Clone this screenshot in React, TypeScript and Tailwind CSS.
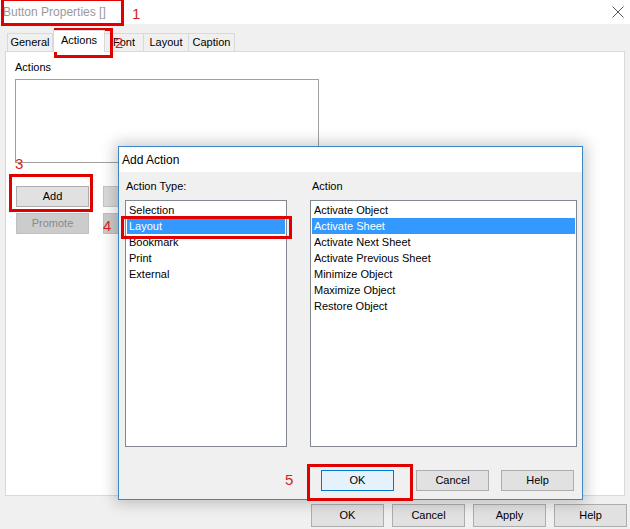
import React from "react";

const font = { fontFamily: '"Liberation Sans", Arial, sans-serif' };

type Variant = "normal" | "disabled" | "default" | "hidden";

function Btn({ label, h, variant = "normal", className = "" }: { label: string; h: "21" | "23"; variant?: Variant; className?: string }) {
  const v =
    variant === "disabled"
      ? "bg-[#cccccc] border-[#bfbfbf] text-[#8a8a8a]"
      : variant === "default"
      ? "bg-[#e5f1fb] border-[#0078d7] text-black"
      : variant === "hidden"
      ? "bg-[#dadada] border-[#c4c4c4] text-black"
      : "bg-[#e1e1e1] border-[#adadad] text-black";
  const hc = h === "21" ? "h-[21px]" : "h-[23px]";
  return (
    <div className={`flex items-center justify-center w-[73px] border text-[11px] ${hc} ${v} ${className}`}>
      {label}
    </div>
  );
}

function ListBox({
  items,
  selected,
  className = "",
}: {
  items: string[];
  selected: number;
  className?: string;
}) {
  return (
    <div className={`bg-white border border-[#828790] pt-px px-px ${className}`}>
      {items.map((it, i) => (
        <div
          key={it}
          className={`h-[16px] leading-[16px] pl-[2px] text-[11px] whitespace-nowrap ${
            i === selected ? "bg-[#3399ff] text-white" : "text-black"
          }`}
        >
          {it}
        </div>
      ))}
    </div>
  );
}

export default function App() {
  return (
    <div
      className="relative w-[630px] h-[529px] overflow-hidden bg-[#f0f0f0] text-[11px] text-black"
      style={font}
    >
      {/* Title bar */}
      <div className="h-[24px] bg-white flex items-center justify-between pl-[3px] pr-[6px]">
        <span className="text-[12px] text-[#999999]">Button Properties []</span>
        <svg width="12" height="12" viewBox="0 0 12 12">
          <path d="M0.5 0.5 L11.5 11.5 M11.5 0.5 L0.5 11.5" stroke="#555" strokeWidth="1" fill="none" />
        </svg>
      </div>

      {/* Tabs */}
      <div className="flex items-end h-[27px] pl-[7px]">
        <div className="h-[18px] w-[46px] border border-b-0 border-[#d9d9d9] bg-[#f0f0f0] flex items-center justify-center">
          General
        </div>
        <div className="relative z-10 -mb-px h-[22px] w-[52px] border border-b-0 border-[#d9d9d9] bg-white flex items-center justify-center pb-[3px]">
          Actions
        </div>
        <div className="h-[18px] w-[39px] border border-l-0 border-b-0 border-[#d9d9d9] bg-[#f0f0f0] flex items-center justify-center">
          Font
        </div>
        <div className="h-[18px] w-[45px] border border-l-0 border-b-0 border-[#d9d9d9] bg-[#f0f0f0] flex items-center justify-center">
          Layout
        </div>
        <div className="h-[18px] w-[46px] border border-l-0 border-b-0 border-[#d9d9d9] bg-[#f0f0f0] flex items-center justify-center">
          Caption
        </div>
      </div>

      {/* Panel */}
      <div className="mx-[5px] h-[445px] bg-white border border-[#d9d9d9] pt-[8px] pl-[9px]">
        <div className="leading-[14px]">Actions</div>
        <div className="mt-[5px] w-[304px] h-[84px] border border-[#a0a0a0] bg-white" />
        <div className="mt-[23px] ml-[1px] flex gap-[14px]">
          <Btn label="Add" h="21" />
          <Btn label="" h="21" variant="hidden" />
        </div>
        <div className="mt-[6px] ml-[1px] flex gap-[14px]">
          <Btn label="Promote" h="21" variant="disabled" />
          <Btn label="" h="21" variant="disabled" />
        </div>
      </div>

      {/* Bottom buttons */}
      <div className="mt-[8px] flex justify-end gap-[8px] pr-[3px]">
        <Btn label="OK" h="23" />
        <Btn label="Cancel" h="23" />
        <Btn label="Apply" h="23" />
        <Btn label="Help" h="23" />
      </div>

      {/* Add Action dialog */}
      <div className="absolute left-[118px] top-[146px] w-[465px] h-[354px] border border-[#3a86c8] bg-[#f0f0f0] shadow-[0_0_14px_3px_rgba(0,0,0,0.22)] flex flex-col">
        <div className="h-[25px] bg-white flex items-center pl-[3px] text-[12px]">Add Action</div>
        <div className="flex pl-[6px] pt-[7px] gap-[23px]">
          <div className="flex flex-col">
            <div className="leading-[14px] pl-px">Action Type:</div>
            <ListBox
              className="mt-[7px] w-[162px] h-[247px]"
              items={["Selection", "Layout", "Bookmark", "Print", "External"]}
              selected={1}
            />
          </div>
          <div className="flex flex-col">
            <div className="leading-[14px] pl-[2px]">Action</div>
            <ListBox
              className="mt-[7px] w-[267px] h-[247px]"
              items={[
                "Activate Object",
                "Activate Sheet",
                "Activate Next Sheet",
                "Activate Previous Sheet",
                "Minimize Object",
                "Maximize Object",
                "Restore Object",
              ]}
              selected={1}
            />
          </div>
        </div>
        <div className="mt-[23px] flex pl-[202px]">
          <Btn label="OK" h="21" variant="default" />
          <Btn label="Cancel" h="21" className="ml-[22px]" />
          <Btn label="Help" h="21" className="ml-[12px]" />
        </div>
      </div>

      {/* Red annotations */}
      <div className="absolute left-[1px] top-[-2px] w-[123px] h-[28px] border-[3px] border-[#e10000]" />
      <div className="absolute left-[132px] top-[5px] text-[15px] leading-[18px] text-[#d81e1e]">1</div>

      <div className="absolute left-[54px] top-[28px] w-[59px] h-[30px] border-[3px] border-[#e10000]" />
      <div className="absolute left-[115px] top-[34px] text-[15px] leading-[18px] text-[#d81e1e]">2</div>

      <div className="absolute left-[9px] top-[174px] w-[84px] h-[38px] border-[3px] border-[#e10000]" />
      <div className="absolute left-[15px] top-[155px] text-[15px] leading-[18px] text-[#d81e1e]">3</div>

      <div className="absolute left-[121px] top-[216px] w-[171px] h-[23px] border-[3px] border-[#e10000]" />
      <div className="absolute left-[103px] top-[217px] text-[15px] leading-[18px] text-[#d81e1e]">4</div>

      <div className="absolute left-[307px] top-[464px] w-[106px] h-[37px] border-[3px] border-[#e10000]" />
      <div className="absolute left-[285px] top-[471px] text-[15px] leading-[18px] text-[#d81e1e]">5</div>
    </div>
  );
}
